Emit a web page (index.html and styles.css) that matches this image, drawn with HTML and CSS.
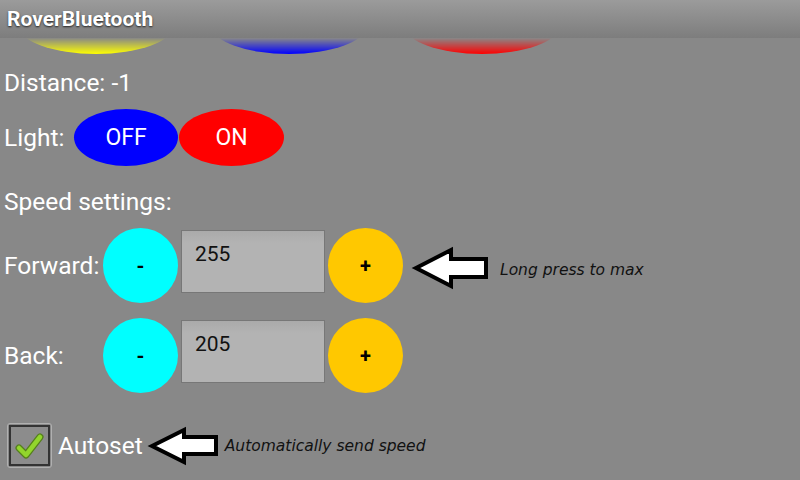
FILE: index.html
```html
<!DOCTYPE html>
<html>
<head>
<meta charset="utf-8">
<link rel="stylesheet" href="styles.css">
</head>
<body>
<div class="titlebar"><span>RoverBluetooth</span></div>
<div class="strip">
  <div class="oval yellow"></div>
  <div class="oval blue"></div>
  <div class="oval red"></div>
</div>
<main class="content">
  <div class="line">Distance: -1</div>
  <div class="row light">
    <span class="light-label">Light:</span>
    <div class="pill off">OFF</div>
    <div class="pill on">ON</div>
  </div>
  <div class="line speed">Speed settings:</div>
  <div class="row speedrow">
    <span class="label">Forward:</span>
    <div class="circle minus">-</div>
    <div class="field">255</div>
    <div class="circle plus">+</div>
    <svg class="arrow1" width="80" height="46" viewBox="0 0 80 46">
      <polygon points="6,23 41,5 41,14 76,14 76,32 41,32 41,41" fill="#fff" stroke="#000" stroke-width="4" stroke-linejoin="miter"/>
    </svg>
    <span class="note note1">Long press to max</span>
  </div>
  <div class="row speedrow back">
    <span class="label">Back:</span>
    <div class="circle minus">-</div>
    <div class="field">205</div>
    <div class="circle plus">+</div>
  </div>
  <div class="row autoset">
    <div class="check">
      <div class="check-inner">
        <svg width="41" height="41" viewBox="0 0 41 41">
          <path d="M10 23 L17 30 L31 12" fill="none" stroke="#557f1c" stroke-width="7" stroke-linecap="round" stroke-linejoin="round"/>
          <path d="M10 23 L17 30 L31 12" fill="none" stroke="#92d62c" stroke-width="4.5" stroke-linecap="round" stroke-linejoin="round"/>
        </svg>
      </div>
    </div>
    <span class="autoset-label">Autoset</span>
    <svg class="arrow2" width="74" height="42" viewBox="0 0 74 42">
      <polygon points="6,21 38,5 38,12 70,12 70,29 38,29 38,37" fill="#fff" stroke="#000" stroke-width="4" stroke-linejoin="miter"/>
    </svg>
    <span class="note note2">Automatically send speed</span>
  </div>
</main>
</body>
</html>
```
FILE: styles.css
```css
* { box-sizing: border-box; }
html, body { margin: 0; padding: 0; }
body {
  width: 800px;
  height: 480px;
  overflow: hidden;
  background: #888888;
  color: #ffffff;
  font-family: Roboto, "Noto Sans", sans-serif;
}
.titlebar {
  height: 38px;
  display: flex;
  align-items: center;
  padding: 0 0 0 7px;
  background: linear-gradient(to bottom, #9b9b9b, #7d7d7d);
  font-weight: bold;
  font-size: 21px;
  text-shadow: 0 1px 2px rgba(0,0,0,0.75);
}
.strip {
  height: 16px;
  display: flex;
  align-items: flex-end;
  gap: 37px;
  padding-left: 18px;
  overflow: hidden;
  -webkit-mask-image: linear-gradient(to bottom, transparent 0%, #000 100%);
  mask-image: linear-gradient(to bottom, transparent 0%, #000 100%);
}
.oval {
  flex: none;
  width: 156px;
  height: 58px;
  border-radius: 50%;
}
.yellow { background: #ffff00; }
.blue { background: #0000ff; }
.red { background: #ff0000; }
.content {
  padding: 15px 0 0 4px;
}
.line {
  font-size: 24.5px;
  line-height: 28px;
}
.row {
  display: flex;
  align-items: center;
  font-size: 24.5px;
  line-height: 28px;
}
.light {
  margin-top: 12px;
  height: 57px;
}
.light-label { width: 70px; }
.pill {
  width: 104px;
  height: 57px;
  border-radius: 50%;
  display: flex;
  align-items: center;
  justify-content: center;
  font-size: 23px;
}
.off { background: #0000ff; }
.on { background: #ff0000; width: 105px; margin-left: 1px; }
.speed { margin-top: 22px; }
.speedrow {
  margin-top: 12px;
  height: 75px;
}
.back { margin-top: 15px; }
.label { width: 99px; }
.circle {
  flex: none;
  width: 75px;
  height: 75px;
  border-radius: 50%;
  display: flex;
  align-items: center;
  justify-content: center;
  color: #000;
  font-weight: bold;
  font-size: 20px;
}
.minus { background: #00ffff; }
.plus { background: #ffc800; margin-left: 3px; }
.field {
  align-self: flex-start;
  margin: 2px 0 0 3px;
  width: 144px;
  height: 63px;
  border: 1px solid #777;
  background: linear-gradient(to bottom, #aaaaaa, #b3b3b3 20%, #b3b3b3);
  padding: 11px 0 0 13px;
  font-size: 21px;
  line-height: 25px;
  color: #111;
}
.arrow1 { margin: 5px 0 0 7px; flex: none; }
.note {
  font-family: "DejaVu Sans", sans-serif;
  font-style: italic;
  font-size: 15.5px;
  color: #111;
}
.note1 { margin: 8px 0 0 10px; }
.autoset {
  margin-top: 30px;
  height: 45px;
}
.check {
  margin-left: 3px;
  width: 45px;
  height: 45px;
  border: 1px solid #b0b0b0;
  border-radius: 3px;
  padding: 1px;
  background: #888;
}
.check-inner {
  width: 100%;
  height: 100%;
  border: 2px solid #333;
  background: #8c8c8c;
}
.check-inner svg { display: block; margin: -2px; }
.autoset-label { margin-left: 6px; }
.arrow2 { margin-left: 3px; flex: none; }
.note2 { margin: 0 0 0 5px; }
```
